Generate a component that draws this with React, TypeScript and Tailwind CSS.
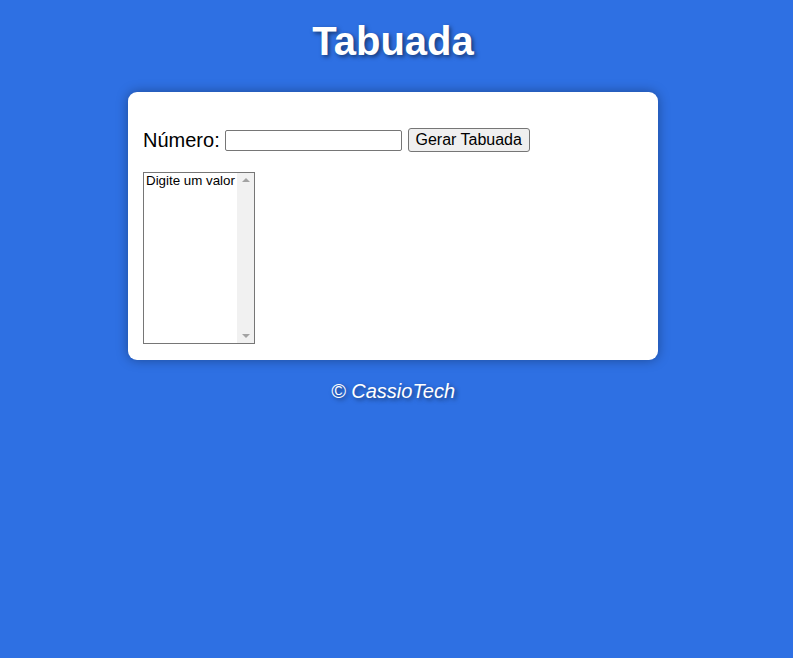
import React from 'react'

const App = () => {
  return (
    <div className="min-h-[658px] w-full bg-[#2e70e3] font-['Liberation_Sans',Arial,sans-serif] text-black">
      <div className="w-[786px]">
        <h1 className="pt-[18px] text-center text-[40px] font-bold leading-[46px] text-white [text-shadow:2px_2px_4px_rgba(0,0,0,0.5)]">
          Tabuada
        </h1>
        <section className="mx-auto mt-[28px] w-[530px] rounded-[9px] bg-white px-[15px] pt-[36px] pb-[16px] shadow-[0_0_12px_rgba(0,0,0,0.35)]">
          <div className="flex h-[24px] items-center">
            <span className="text-[20px] leading-[23px]">Número:</span>
            <input
              type="text"
              className="ml-[5px] h-[21px] w-[177px] rounded-[2px] border border-[#767676] bg-white px-[2px] text-[13px] outline-none"
            />
            <button className="ml-[6px] h-[24px] w-[122px] rounded-[3px] border border-[#767676] bg-[#efefef] text-[16px] leading-[20px]">
              Gerar Tabuada
            </button>
          </div>
          <div className="mt-[20px] flex h-[172px] w-[112px] border border-[#767676] bg-white">
            <div className="flex-1 overflow-hidden whitespace-nowrap pl-[2px] text-[13.33px] leading-[16px]">
              Digite um valor
            </div>
            <div className="flex w-[17px] flex-col items-center justify-between bg-[#f1f1f1] py-[5px]">
              <span className="h-0 w-0 border-x-[4px] border-b-[4px] border-x-transparent border-b-[#a3a3a3]" />
              <span className="h-0 w-0 border-x-[4px] border-t-[4px] border-x-transparent border-t-[#a3a3a3]" />
            </div>
          </div>
        </section>
        <footer className="mt-[20px] text-center text-[20px] italic leading-[23px] text-white [text-shadow:2px_2px_4px_rgba(0,0,0,0.5)]">
          © CassioTech
        </footer>
      </div>
    </div>
  )
}

export default App
